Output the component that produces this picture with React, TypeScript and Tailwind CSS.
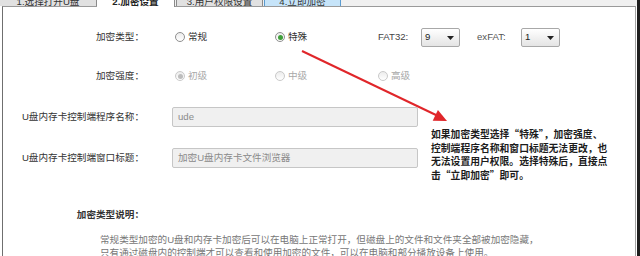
import React from 'react';

const font = "font-['Liberation_Sans','Noto_Sans_CJK_SC',sans-serif]";

function Radio({ label, checked, disabled, width }: { label: string; checked?: boolean; disabled?: boolean; width: string }) {
  return (
    <div className={`flex items-center gap-[3px] ${width}`}>
      <span
        className={`flex h-[10px] w-[10px] items-center justify-center rounded-full border bg-linear-to-b from-[#ececec] to-white ${
          disabled ? 'border-[#c9c9c9]' : 'border-[#8f8f8f]'
        }`}
      >
        {checked && (
          <span className={`h-[5px] w-[5px] rounded-full ${disabled ? 'bg-[#bdbdbd]' : 'bg-[#3f9f3a]'}`}></span>
        )}
      </span>
      <span className={disabled ? 'text-[#a8a8a8]' : 'text-[#333]'}>{label}</span>
    </div>
  );
}

function Select({ value }: { value: string }) {
  return (
    <div className="flex h-[19px] w-[39px] items-center justify-between rounded-[2px] border border-[#a8a8a8] bg-linear-to-b from-white to-[#e4e4e4] pl-[3px] pr-[5px] text-[#222]">
      <span>{value}</span>
      <svg width="7" height="4" viewBox="0 0 7 4">
        <polygon points="0,0 7,0 3.5,4" fill="#222" />
      </svg>
    </div>
  );
}

export default function App() {
  return (
    <div className={`relative flex h-[256px] w-[640px] overflow-hidden bg-white text-[9.6px] ${font}`}>
      <div className="flex w-[637px] flex-col">
        {/* Tab strip, tops cut off */}
        <div className="flex h-[6px] bg-[#f0f0f0]">
          <div className="flex h-full w-[97px] items-end justify-center overflow-hidden border-r border-[#8a8a8a] bg-[#e1e1e1]">
            <span className="-mb-[2px] leading-[12px] text-[#333]">1.选择打开U盘</span>
          </div>
          <div className="relative z-10 flex h-[7px] w-[78px] items-end justify-center overflow-hidden border-r border-[#8a8a8a] bg-white">
            <span className="-mb-[1px] leading-[12px] font-bold text-[#222]">2.加密设置</span>
          </div>
          <div className="ml-[1px] flex h-full w-[87px] items-end justify-center overflow-hidden border-x border-[#8a8a8a] bg-[#e1e1e1]">
            <span className="-mb-[2px] leading-[12px] text-[#333]">3.用户权限设置</span>
          </div>
          <div className="ml-[1px] flex h-full w-[77px] items-end justify-center overflow-hidden border-x border-[#5a9bd0] bg-[#c6e4f9]">
            <span className="-mb-[2px] leading-[12px] text-[#333]">4.立即加密</span>
          </div>
        </div>

        {/* Panel */}
        <div className="relative ml-[2px] flex w-[634px] flex-1 flex-col border-x border-t border-l-[#6f6f6f] border-r-[#a4a4a4] border-t-[#9a9a9a] bg-white">
          <div className="mt-[21px] flex h-[19px] items-center">
            <div className="w-[141px] text-right text-[#333]">加密类型：</div>
            <div className="ml-[31px] flex items-center">
              <Radio label="常规" width="w-[100px]" />
              <Radio label="特殊" checked width="w-[103px]" />
              <span className="w-[43px] text-[#444]">FAT32:</span>
              <Select value="9" />
              <span className="ml-[17px] w-[44px] text-[#555]">exFAT:</span>
              <Select value="1" />
            </div>
          </div>

          <div className="mt-[20px] flex h-[19px] items-center">
            <div className="w-[141px] text-right text-[#333]">加密强度：</div>
            <div className="ml-[31px] flex items-center">
              <Radio label="初级" checked disabled width="w-[100px]" />
              <Radio label="中级" disabled width="w-[103px]" />
              <Radio label="高级" disabled width="w-[100px]" />
            </div>
          </div>

          <div className="mt-[21px] flex h-[20px] items-center">
            <div className="w-[141px] text-right text-[#333]">U盘内存卡控制端程序名称：</div>
            <div className="ml-[28px] flex h-full w-[246px] items-center rounded-[2px] border border-[#c6c6c6] bg-[#f0f0f0] pl-[5px] text-[#8a8a8a]">
              ude
            </div>
          </div>

          <div className="mt-[21px] flex h-[20px] items-center">
            <div className="w-[141px] text-right text-[#333]">U盘内存卡控制端窗口标题：</div>
            <div className="ml-[28px] flex h-full w-[246px] items-center rounded-[2px] border border-[#c6c6c6] bg-[#f0f0f0] pl-[5px] text-[#8a8a8a]">
              加密U盘内存卡文件浏览器
            </div>
          </div>

          <div className="mt-[40px] flex h-[14px] items-center">
            <div className="w-[141px] text-right font-bold text-[#333]">加密类型说明：</div>
          </div>

          <div className="mt-[11px] pl-[97px] leading-[13px] text-[#777]">
            <p>常规类型加密的U盘和内存卡加密后可以在电脑上正常打开，但磁盘上的文件和文件夹全部被加密隐藏，</p>
            <p>只有通过磁盘内的控制端才可以查看和使用加密的文件，可以在电脑和部分播放设备上使用。</p>
          </div>

          {/* Annotation note */}
          <div className="absolute left-[428px] top-[121px] w-[185px] font-['Noto_Sans_CJK_SC',sans-serif] text-[9.8px] leading-[13.5px] font-bold text-[#1c1c1c]">
            <p>如果加密类型选择“特殊”，加密强度、</p>
            <p>控制端程序名称和窗口标题无法更改，也</p>
            <p>无法设置用户权限。选择特殊后，直接点</p>
            <p>击“立即加密”即可。</p>
          </div>
        </div>
      </div>
      <div className="w-[3px] bg-[#1e1e1e]"></div>

      {/* Red annotation arrow */}
      <svg className="pointer-events-none absolute left-0 top-0" width="640" height="256" viewBox="0 0 640 256">
        <line x1="302" y1="51" x2="437" y2="115.5" stroke="#e0262a" strokeWidth="2" />
        <polygon points="447,121 432.7,120.7 437.9,109.9" fill="#e0262a" />
      </svg>
    </div>
  );
}
